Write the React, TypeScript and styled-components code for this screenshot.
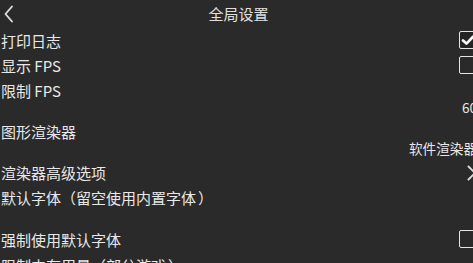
import React from 'react';
import styled, { createGlobalStyle } from 'styled-components';

const GlobalStyle = createGlobalStyle`
  html, body {
    margin: 0;
    padding: 0;
    background: #2a2a2a;
    overflow: hidden;
  }
  body {
    font-family: "Noto Sans CJK SC", "Noto Sans", sans-serif;
    color: #e8e8e8;
  }
`;

const Page = styled.div`
  width: 477px;
  height: 263px;
  display: flex;
  flex-direction: column;
`;

const Header = styled.div`
  height: 28px;
  flex: none;
  display: grid;
  grid-template-columns: 40px 1fr 40px;
  align-items: center;
`;

const BackButton = styled.div`
  padding-left: 4px;
  display: flex;
  align-items: center;
`;

const Title = styled.div`
  text-align: center;
  font-size: 15px;
  line-height: 18px;
  color: #e0e0e0;
`;

const Row = styled.div<{ $h?: number }>`
  flex: none;
  height: ${(p) => p.$h ?? 25}px;
  display: flex;
  align-items: center;
  justify-content: space-between;
  padding-left: 1px;
`;

const Block = styled.div`
  flex: none;
  display: flex;
  flex-direction: column;
  padding: 4px 0 5px 1px;
`;

const Label = styled.div`
  font-size: 15px;
  line-height: 18px;
  white-space: nowrap;
`;

// full-width bracket kept in its own em box
const Paren = styled.span<{ $open?: boolean }>`
  display: inline-block;
  width: 1em;
  text-align: ${(p) => (p.$open ? 'right' : 'left')};
  ${(p) => (p.$open ? 'padding-right: 2px;' : 'padding-left: 2px;')}
  box-sizing: border-box;
`;

const Value = styled.div`
  font-size: 13.6px;
  line-height: 14px;
  height: 14px;
  text-align: right;
  white-space: nowrap;
`;

const Box = styled.div<{ $checked?: boolean }>`
  width: 16px;
  height: 16px;
  border: 1.6px solid #e4e4e4;
  border-radius: 2px;
  display: flex;
  align-items: center;
  justify-content: center;
  margin-top: -2px;
  background: ${(p) => (p.$checked ? '#232323' : 'transparent')};
`;

function Checkbox({ checked }: { checked?: boolean }) {
  return (
    <Box $checked={checked}>
      {checked && (
        <svg width="14" height="14" viewBox="0 0 14 14">
          <polyline points="2,7.4 5.5,10.6 12,3.8" fill="none" stroke="#f4f4f4" strokeWidth="2.7" strokeLinecap="round" strokeLinejoin="round" />
        </svg>
      )}
    </Box>
  );
}

function Chevron({ dir }: { dir: 'left' | 'right' }) {
  const pts = dir === 'left' ? '8,1.5 1.5,9 8,16.5' : '1.5,1.5 8,8 1.5,14.5';
  return (
    <svg width="10" height={dir === 'left' ? 18 : 16} viewBox={dir === 'left' ? '0 0 10 18' : '0 0 10 16'}>
      <polyline points={pts} fill="none" stroke="#dcdcdc" strokeWidth="1.9" strokeLinecap="round" strokeLinejoin="round" />
    </svg>
  );
}

function Note({ main, note }: { main: string; note: string }) {
  return (
    <Label>
      {main}
      <Paren $open>（</Paren>
      {note}
      <Paren>）</Paren>
    </Label>
  );
}

export default function App() {
  return (
    <>
      <GlobalStyle />
      <Page>
        <Header>
          <BackButton>
            <Chevron dir="left" />
          </BackButton>
          <Title>全局设置</Title>
          <div />
        </Header>
        <Row>
          <Label>打印日志</Label>
          <Checkbox checked />
        </Row>
        <Row>
          <Label>显示 FPS</Label>
          <Checkbox />
        </Row>
        <Block>
          <Label>限制 FPS</Label>
          <Value>60</Value>
        </Block>
        <Block>
          <Label>图形渲染器</Label>
          <Value>软件渲染器</Value>
        </Block>
        <Row>
          <Label>渲染器高级选项</Label>
          <Chevron dir="right" />
        </Row>
        <Block>
          <Note main="默认字体" note="留空使用内置字体" />
          <Value />
        </Block>
        <Row $h={27}>
          <Label>强制使用默认字体</Label>
          <Checkbox />
        </Row>
        <Block>
          <Note main="限制内存用量" note="部分游戏" />
          <Value />
        </Block>
      </Page>
    </>
  );
}
